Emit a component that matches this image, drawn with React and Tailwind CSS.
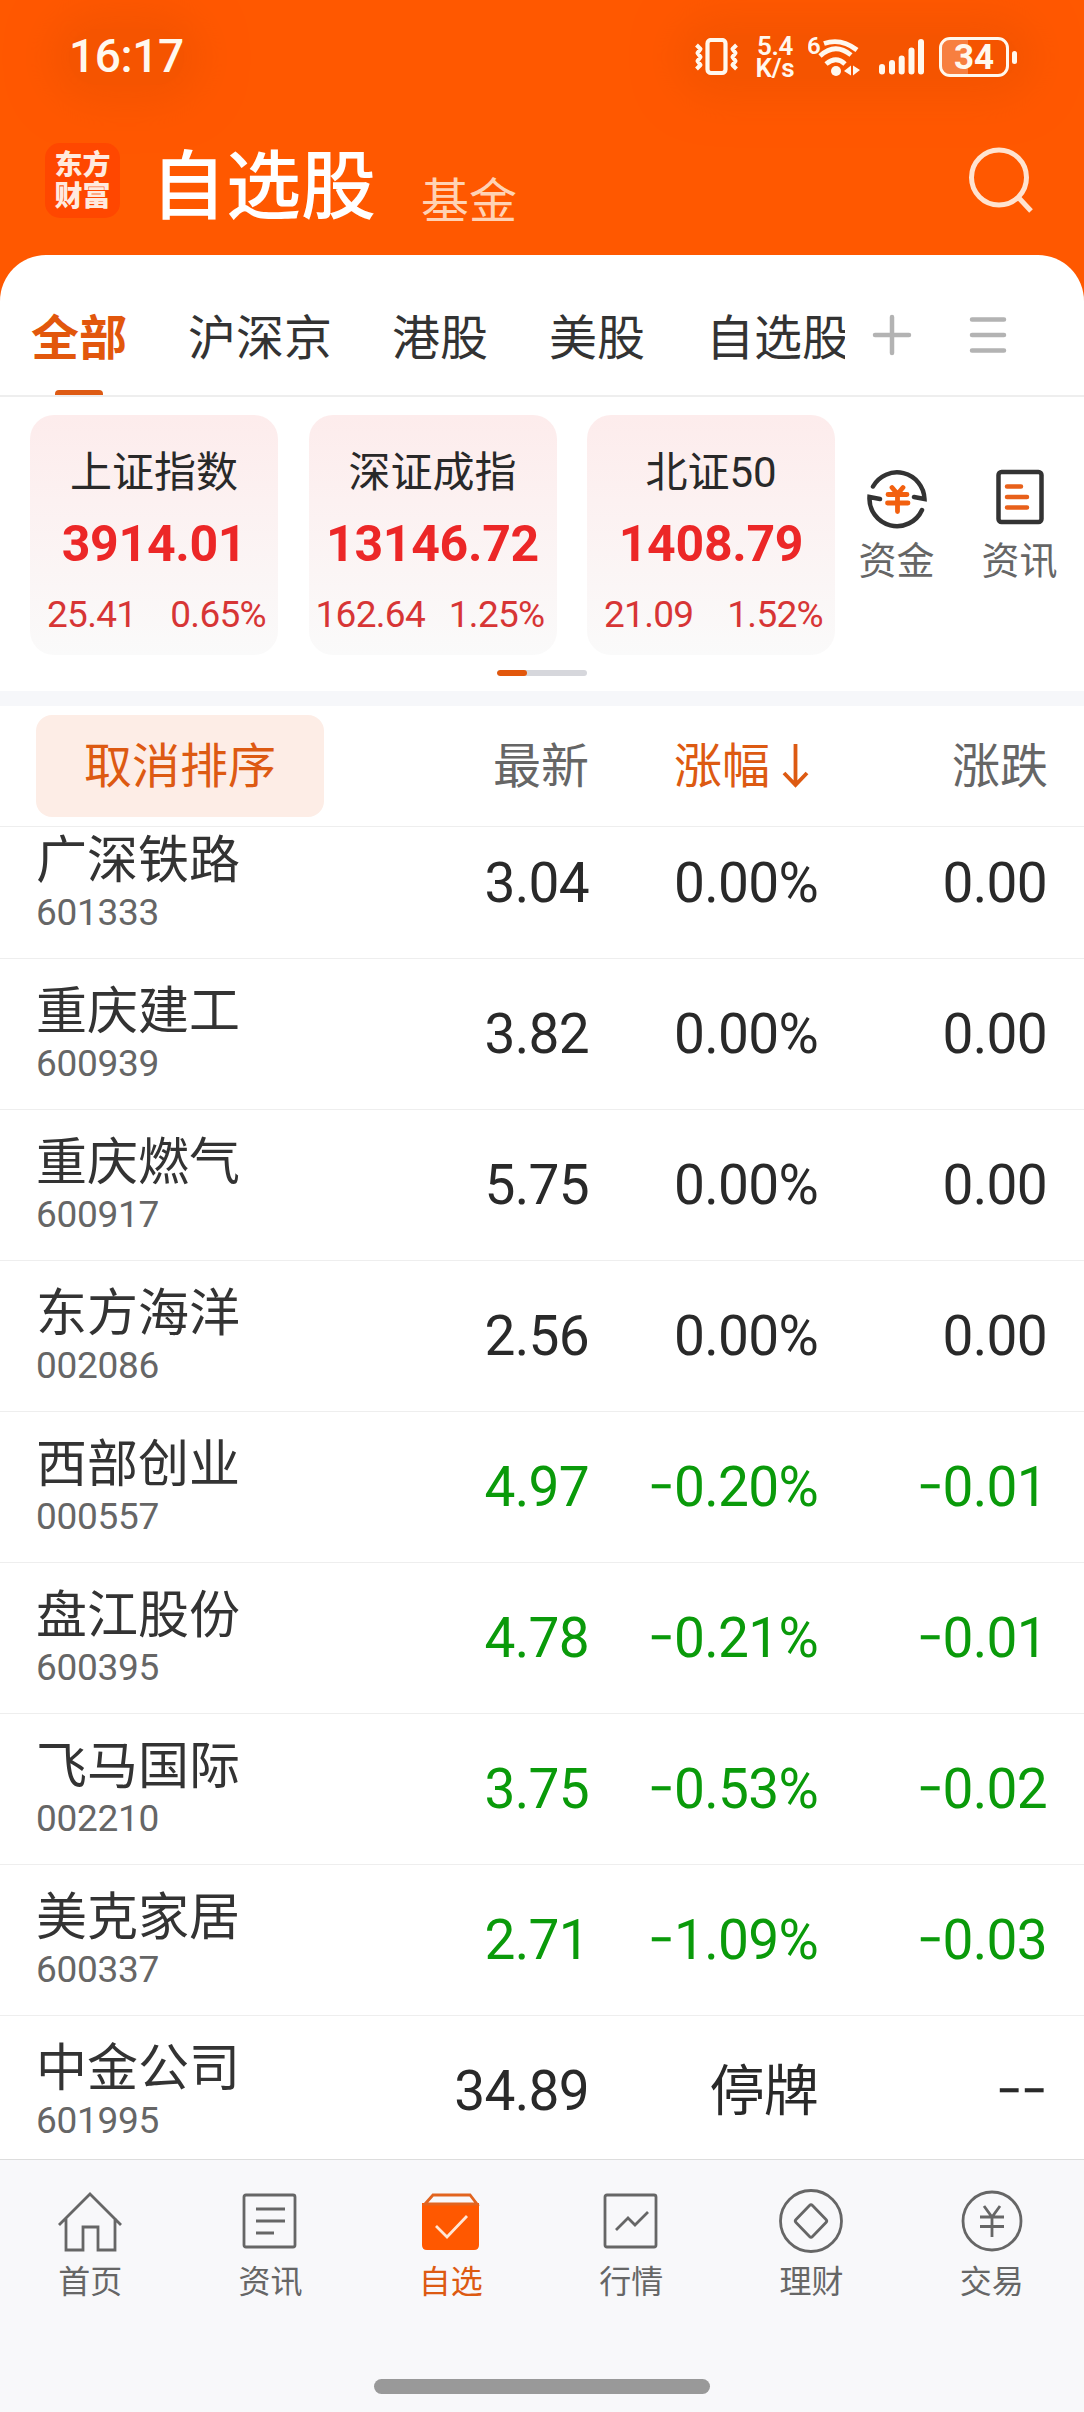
const FONT = "font-['Roboto','Noto_Sans_CJK_SC',sans-serif]";

const tabs = [
  { label: '全部', cls: 'ml-[31px] w-[96px] font-bold text-[#e2570c]' },
  { label: '沪深京', cls: 'ml-[61px] w-[144px] text-[#333]' },
  { label: '港股', cls: 'ml-[60px] w-[96px] text-[#333]' },
  { label: '美股', cls: 'ml-[61px] w-[96px] text-[#333]' },
  { label: '自选股', cls: 'ml-[61px] w-[139px] overflow-hidden text-[#333]' },
];

const indices = [
  { name: '上证指数', value: '3914.01', diff: '25.41', pct: '0.65%', pad: 'pl-[17px] pr-[12px]' },
  { name: '深证成指', value: '13146.72', diff: '162.64', pct: '1.25%', pad: 'pl-[7px] pr-[12px]' },
  { name: '北证50', value: '1408.79', diff: '21.09', pct: '1.52%', pad: 'pl-[17px] pr-[12px]' },
];

const stocks = [
  ['广深铁路', '601333', '3.04', '0.00%', '0.00'],
  ['重庆建工', '600939', '3.82', '0.00%', '0.00'],
  ['重庆燃气', '600917', '5.75', '0.00%', '0.00'],
  ['东方海洋', '002086', '2.56', '0.00%', '0.00'],
  ['西部创业', '000557', '4.97', '-0.20%', '-0.01'],
  ['盘江股份', '600395', '4.78', '-0.21%', '-0.01'],
  ['飞马国际', '002210', '3.75', '-0.53%', '-0.02'],
  ['美克家居', '600337', '2.71', '-1.09%', '-0.03'],
  ['中金公司', '601995', '34.89', '停牌', '--'],
];

function StatusIcons() {
  return (
    <div className="flex h-[44px] items-center text-[#fff8ee]">
      <svg width="43" height="38" viewBox="0 0 43 38" fill="none" stroke="currentColor">
        <rect x="12.500" y="2" width="18" height="33" rx="3.500" strokeWidth="4.200" />
        <path d="M1.500 7l4 4-3 4 3 4-3 4 3 4-4 4M41.500 7l-4 4 3 4-3 4 3 4-3 4 4 4" strokeWidth="4" strokeLinejoin="round" />
      </svg>
      <div className="ml-[17px] flex w-[40px] flex-col items-center text-[26px] leading-[22px] font-semibold tracking-[-0.3px]">
        <span>5.4</span>
        <span>K/s</span>
      </div>
      <svg className="ml-[13px]" width="52" height="42" viewBox="0 0 52 42" fill="none" stroke="currentColor">
        <text x="-1" y="18" fontSize="24" fontWeight="600" fill="currentColor" stroke="none">6</text>
        <path d="M16 7.500q17-6 33 6.500M12 20q15-14 31-1M18 28q10-8.500 19 0" strokeWidth="4.800" />
        <circle cx="28" cy="35" r="5" fill="currentColor" stroke="none" />
        <path d="M36 35l7-5.500v10zM45 29.500v10l7-5.500z" fill="currentColor" stroke="none" />
      </svg>
      <svg className="ml-[19px]" width="46" height="38" viewBox="0 0 46 38" stroke="currentColor" strokeWidth="6" strokeLinecap="round">
        <path d="M3 29v4.500M13 25v8.500M22.700 20.500v13M32.500 12.500v21M42 4v29.500" />
      </svg>
      <div className="relative ml-[14px] flex h-[40px] w-[70px] items-center justify-center overflow-hidden rounded-[11px] border-[3px] border-current">
        <div className="absolute inset-y-0 left-0 w-[26px] bg-white/25" />
        <span className="relative text-[35px] leading-none font-bold">34</span>
      </div>
      <div className="ml-[3px] h-[13px] w-[5px] rounded-full bg-current" />
    </div>
  );
}

function Header() {
  return (
    <header className="h-[310px] bg-[#ff5800]">
      <div className="flex h-[114px] items-center justify-between pr-[67px] pl-[69px]">
        <span className="rounded-full bg-[#f55400] pb-[2px] text-[46px] leading-[54px] font-medium tracking-[-0.4px] text-[#fff8ee] shadow-[0_0_40px_20px_#f55400]">16:17</span>
        <div className="rounded-full bg-[#f55400] shadow-[0_0_40px_20px_#f55400]">
          <StatusIcons />
        </div>
      </div>
      <div className="flex h-[130px] items-start">
        <div className="mt-[29px] ml-[45px] grid h-[75px] w-[75px] content-center rounded-[15px] bg-[#ff4700] text-center text-[28px] leading-[31px] font-black text-[#ffeadf]">
          <span>东方</span>
          <span>财富</span>
        </div>
        <h1 className="mt-[20px] ml-[31px] w-[225px] text-[75px] leading-[106px] font-medium whitespace-nowrap text-white">自选股</h1>
        <span className="mt-[52px] ml-[45px] text-[48px] leading-[72px] text-[#ffd2b4]">基金</span>
        <svg className="mt-[32px] mr-[49px] ml-auto" width="67" height="68" viewBox="0 0 67 68" fill="none" stroke="#ffe3d0" strokeWidth="5">
          <circle cx="31" cy="31.500" r="27.500" />
          <path d="M50 51l13 14" />
        </svg>
      </div>
    </header>
  );
}

function TabBar() {
  return (
    <div className="flex h-[142px] items-start border-b-2 border-[#eee]">
      {tabs.map((t, i) => (
        <div key={t.label} className={`relative h-[140px] shrink-0 pt-[48px] text-[48px] leading-[72px] whitespace-nowrap ${t.cls}`}>
          {t.label}
          {i === 0 && <div className="absolute bottom-0 left-[24px] h-[5px] w-[48px] rounded-t bg-[#de5b14]" />}
        </div>
      ))}
      <svg className="mt-[59px] ml-[27px]" width="40" height="42" viewBox="0 0 40 42" stroke="#b3b3b3" strokeWidth="4.500" strokeLinecap="round">
        <path d="M3 21h34M20 3v36" />
      </svg>
      <svg className="mt-[59px] ml-[56px]" width="40" height="42" viewBox="0 0 40 42" stroke="#b3b3b3" strokeWidth="4.500" strokeLinecap="round">
        <path d="M4 5.500h32M4 21h32M4 36.500h32" />
      </svg>
    </div>
  );
}

function IndexStrip() {
  return (
    <div className="flex h-[242px] items-start pt-[18px] pl-[30px]">
      {indices.map((x) => (
        <div key={x.name} className="mr-[30.5px] flex h-[240px] w-[248px] shrink-0 flex-col items-center rounded-[24px] bg-gradient-to-b from-[#fdecec] to-[#fafafa]">
          <div className="mt-[27px] text-[42px] leading-[62px] text-[#292929]">{x.name}</div>
          <div className="mt-[10px] text-[50px] leading-[60px] font-bold tracking-[-0.3px] text-[#ec2727]">{x.value}</div>
          <div className={`mt-[19px] flex w-full justify-between text-[37px] leading-[44px] tracking-[-0.7px] text-[#d73535] ${x.pad}`}>
            <span>{x.diff}</span>
            <span>{x.pct}</span>
          </div>
        </div>
      ))}
      <div className="-ml-[8px] flex w-[78px] flex-col items-center pt-[51px] text-[38px] leading-[56px] text-[#666]">
        <svg width="62" height="64" viewBox="0 0 62 64" fill="none" stroke="#333" strokeWidth="4.500" strokeLinecap="round">
          <path d="M7 20.500A27.500 27.500 0 0 1 58.500 33l-10.500-2M56 44A27.500 27.500 0 0 1 3.500 31l10.500 2" />
          <path d="M26 21.500l5.500 6.500 5.500-6.500M31.500 28v17.500M22 28.500h19M21.500 37h20.500" stroke="#f2600f" strokeWidth="4.800" />
        </svg>
        <span className="mt-[3px]">资金</span>
      </div>
      <div className="ml-[45px] flex w-[78px] flex-col items-center pt-[51px] text-[38px] leading-[56px] text-[#666]">
        <svg width="50" height="64" viewBox="0 0 50 64" fill="none" stroke="#333" strokeWidth="4.500" strokeLinecap="round">
          <rect x="3.500" y="6" width="43" height="50" rx="3" />
          <path d="M12 20.500h14M12 31h20M12 41.500h20" stroke="#e8601a" />
        </svg>
        <span className="mt-[3px]">资讯</span>
      </div>
    </div>
  );
}

function ListHeader() {
  return (
    <div className="flex h-[121px] shrink-0 items-center border-b border-[#eee] text-[48px] leading-[72px] text-[#666]">
      <div className="ml-[36px] flex h-[102px] w-[288px] items-center justify-center rounded-[16px] bg-[#fdede6] pt-[2px] text-[#dd5a12]">取消排序</div>
      <span className="w-[265px] pt-[2px] text-right">最新</span>
      <div className="flex w-[221px] items-center justify-end pt-[2px] text-[#dd5a12]">
        <span>涨幅</span>
        <svg className="mr-[1px] mb-[4px] ml-[12px]" width="27" height="46" viewBox="0 0 27 46" fill="none" stroke="currentColor" strokeWidth="3.800">
          <path d="M13.500 2v42M2 31l11.500 12L25 31" />
        </svg>
      </div>
      <span className="w-[238px] pt-[2px] text-right">涨跌</span>
    </div>
  );
}

/* Number cell; every leading dash is drawn as a narrowed minus sign. */
function Figure({ value, width }) {
  const body = value.replace(/^-+/, '');
  const dashes = value.length - body.length;
  return (
    <span className={`flex justify-end ${width}`}>
      {Array.from({ length: dashes }, (_, i) => (
        <span key={i} className="-ml-[5px] inline-block origin-right scale-x-[0.84]">−</span>
      ))}
      {body}
    </span>
  );
}

function StockRow({ row, first }) {
  const [name, code, price, pct, diff] = row;
  const color = pct.startsWith('-') ? 'text-[#0a9a0a]' : 'text-[#292929]';
  return (
    <div className={`flex h-[151px] shrink-0 border-b border-[#eee] ${first ? '-mt-[19px]' : ''}`}>
      <div className="w-[289px] pt-[17px] pl-[36px]">
        <div className="text-[51px] leading-[72px] text-[#333]">{name}</div>
        <div className="-mt-[6px] text-[37px] leading-[44px] tracking-[-0.3px] text-[#666]">{code}</div>
      </div>
      <div className={`flex pt-[39px] text-[55px] leading-[72px] tracking-[-0.7px] ${color}`}>
        <Figure value={price} width="w-[300px]" />
        <Figure value={pct} width="w-[229px]" />
        <Figure value={diff} width="w-[229px]" />
      </div>
    </div>
  );
}

const navIcons = {
  home: <path d="M3 37L34 6l31 31M10 30v32h17V39h15v23h17V30" />,
  news: <path d="M10 7h47q2 0 2 2v48q0 2-2 2H10q-2 0-2-2V9q0-2 2-2zM20 21h29M20 33h29M20 45h18" />,
  fav: (
    <g>
      <path d="M6 16v41q0 4 4 4h47q4 0 4-4V16z" fill="#ff5800" stroke="#ff5800" strokeWidth="2" />
      <path d="M8 16l8-9h37l7 9z" fill="#f8f8fa" stroke="#e2641f" />
      <path d="M19 38l11 11 20-21" stroke="#ffe6d5" />
    </g>
  ),
  chart: <path d="M10 7h47q2 0 2 2v48q0 2-2 2H10q-2 0-2-2V9q0-2 2-2zM19 42l12-12 7 7 13-13" />,
  wealth: (
    <g>
      <circle cx="34" cy="33" r="30.500" />
      <path d="M32.500 17.500L19 31.500q-1.500 1.500 0 3L32.500 48.500q1.500 1.500 3 0L49 34.500q1.500-1.500 0-3L35.500 17.500q-1.500-1.500-3 0z" />
    </g>
  ),
  trade: (
    <g>
      <circle cx="34" cy="33" r="29" />
      <path d="M26 18l8 11 8-11M34 29v20M22 29h24M22 38.500h24" />
    </g>
  ),
};

const nav = [
  ['home', '首页'],
  ['news', '资讯'],
  ['fav', '自选'],
  ['chart', '行情'],
  ['wealth', '理财'],
  ['trade', '交易'],
];

function BottomNav() {
  return (
    <nav className="h-[253px] border-t border-[#ddd] bg-[#f8f8fa]">
      <div className="flex h-[219px] w-[1082px]">
        {nav.map(([id, label]) => (
          <div key={id} className={`flex flex-1 flex-col items-center pt-[28px] text-[32px] leading-[48px] ${id === 'fav' ? 'text-[#dd5a12]' : 'text-[#666]'}`}>
            <svg width="68" height="68" viewBox="0 0 68 68" fill="none" stroke="currentColor" strokeWidth="2.800">
              {navIcons[id]}
            </svg>
            <span className="mt-[2px]">{label}</span>
          </div>
        ))}
      </div>
      <div className="mx-auto h-[15px] w-[336px] rounded-full bg-[#999]" />
    </nav>
  );
}

export default function App() {
  return (
    <div className={`flex h-[2412px] w-[1084px] flex-col overflow-hidden bg-white ${FONT}`}>
      <Header />
      <main className="-mt-[55px] flex h-[1904px] shrink-0 flex-col rounded-t-[46px] bg-white">
        <TabBar />
        <IndexStrip />
        <div className="flex h-[52px] shrink-0 justify-center pt-[31px]">
          <div className="h-[6px] w-[90px] overflow-hidden rounded-full bg-[#d6d7dc]">
            <div className="h-full w-[30px] rounded-full bg-[#e2570c]" />
          </div>
        </div>
        <div className="h-[15px] shrink-0 bg-[#f6f7fa]" />
        <ListHeader />
        <div className="flex min-h-0 flex-1 flex-col overflow-hidden">
          {stocks.map((row, i) => (
            <StockRow key={row[1]} row={row} first={i === 0} />
          ))}
        </div>
      </main>
      <BottomNav />
    </div>
  );
}
